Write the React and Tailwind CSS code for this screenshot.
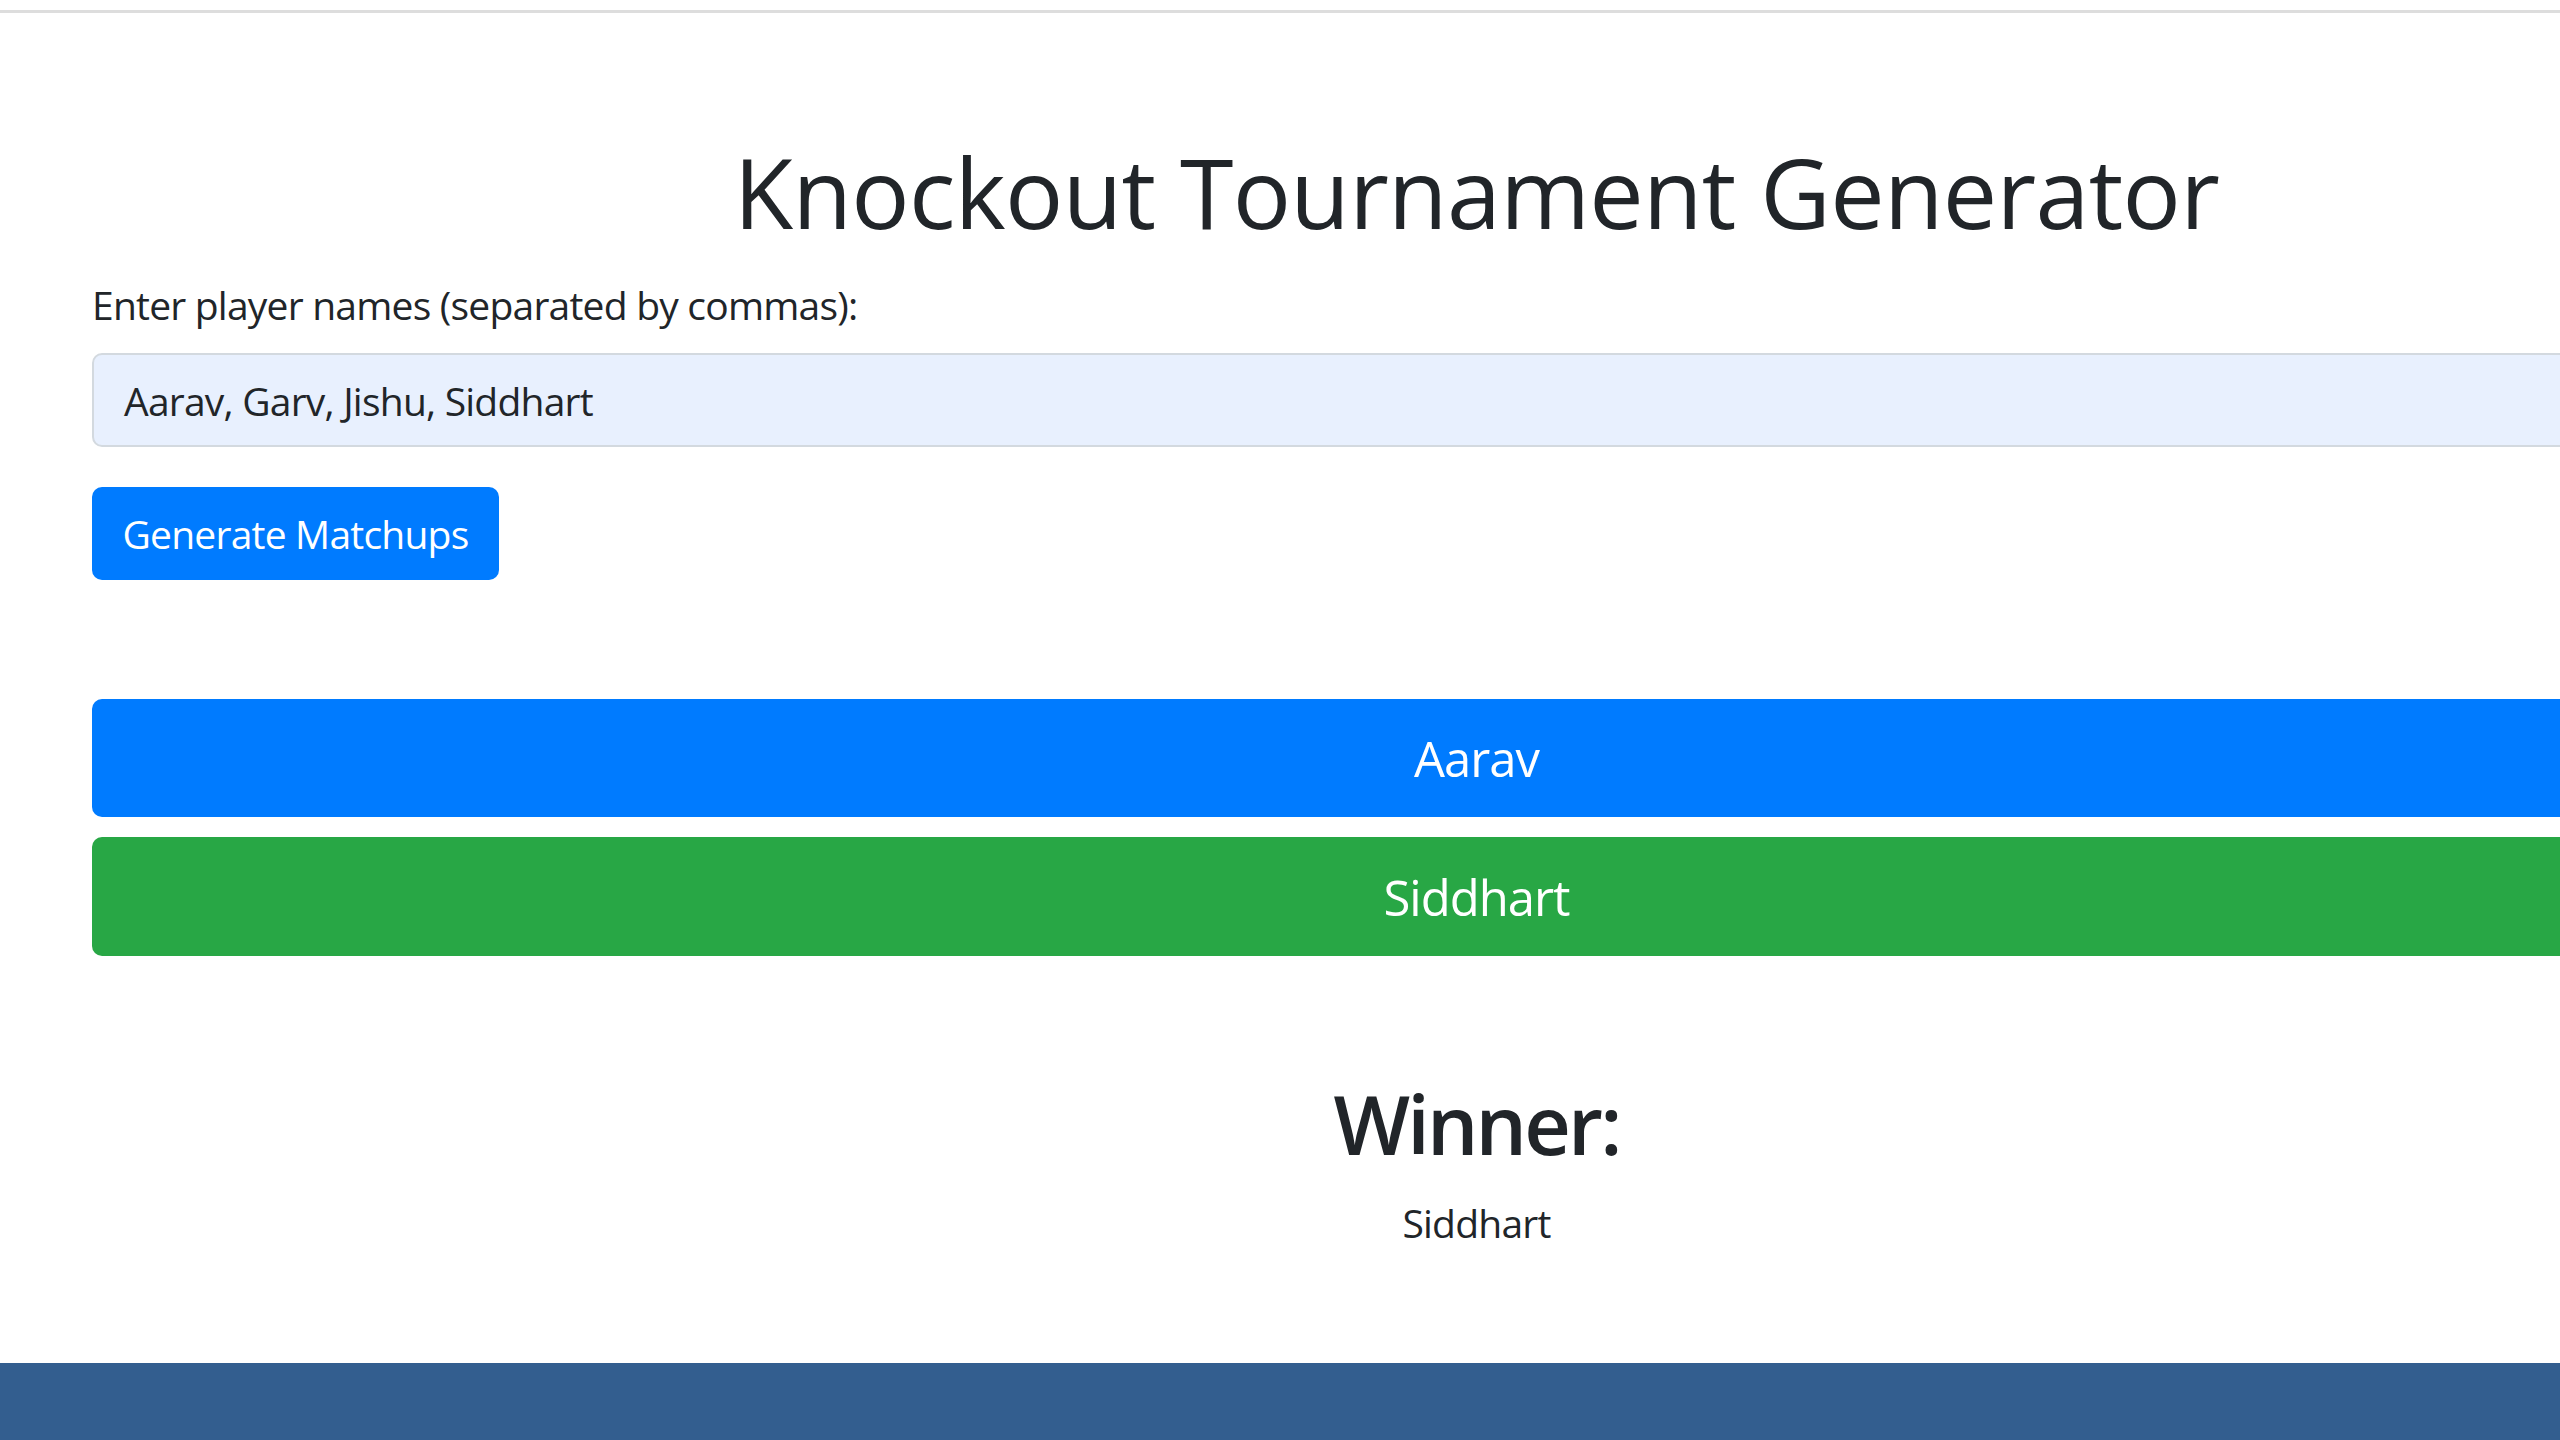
export default function App() {
  const font = { fontFamily: '"Open Sans", "Noto Sans", sans-serif' };
  return (
    <div className="w-[2560px] h-[1440px] overflow-hidden bg-white flex flex-col text-[#212529]" style={font}>
      <div className="mt-[10px] h-[3px] bg-[#dddddd] shrink-0" />
      <div className="flex-1 flex flex-col w-[2769px] ml-[92px] shrink-0">
        <h1 className="mt-[119px] text-center text-[97px] leading-[118px] font-medium tracking-[-0.007em]">
          Knockout Tournament Generator
        </h1>
        <label className="mt-[25px] block text-[39px] leading-[59px] tracking-[-0.02em]">
          Enter player names (separated by commas):
        </label>
        <div className="mt-[19px] h-[94px] rounded-[10px] border-2 border-[#d3d9df] bg-[#e8f0fe] flex items-center px-[30px] text-[39px] leading-[59px] tracking-[-0.02em]">
          Aarav, Garv, Jishu, Siddhart
        </div>
        <div className="mt-[40px]">
          <button className="h-[93px] w-[407px] rounded-[10px] bg-[#007bff] text-white text-[39px] leading-[59px] tracking-[-0.02em] flex items-center justify-center">
            Generate Matchups
          </button>
        </div>
        <div className="mt-[119px] h-[118px] rounded-[10px] bg-[#007bff] text-white text-[49px] leading-[74px] tracking-[-0.02em] flex items-center justify-center">
          Aarav
        </div>
        <div className="mt-[20px] h-[119px] rounded-[10px] bg-[#28a745] text-white text-[49px] leading-[74px] tracking-[-0.02em] flex items-center justify-center">
          Siddhart
        </div>
        <h2 className="mt-[119px] text-center text-[81px] leading-[98px] font-semibold tracking-[-0.035em]">
          Winner:
        </h2>
        <p className="mt-[20px] text-center text-[39px] leading-[59px] tracking-[-0.02em]">Siddhart</p>
      </div>
      <div className="h-[77px] bg-[#335e8f] shrink-0" />
    </div>
  );
}
